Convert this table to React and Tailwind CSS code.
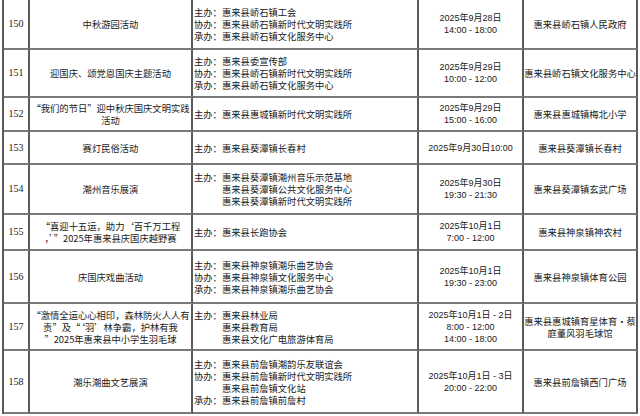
import React from "react";

const rows = [
  {
    n: "150",
    h: "h-[50px]",
    name: ["中秋游园活动"],
    org: [["主办：", "惠来县峤石镇工会"], ["协办：", "惠来县峤石镇新时代文明实践所"], ["承办：", "惠来县峤石镇文化服务中心"]],
    time: ["2025年9月28日", "14:00 - 18:00"],
    place: ["惠来县峤石镇人民政府"],
  },
  {
    n: "151",
    h: "h-[48px]",
    name: ["迎国庆、颂党恩国庆主题活动"],
    org: [["主办：", "惠来县委宣传部"], ["协办：", "惠来县峤石镇新时代文明实践所"], ["承办：", "惠来县峤石镇文化服务中心"]],
    time: ["2025年9月29日", "10:00 - 12:00"],
    place: ["惠来县峤石镇文化服务中心"],
  },
  {
    n: "152",
    h: "h-[34px]",
    name: ["“我们的节日”迎中秋庆国庆文明实践", "活动"],
    org: [["主办：", "惠来县惠城镇新时代文明实践所"]],
    time: ["2025年9月29日", "15:00 - 16:00"],
    place: ["惠来县惠城镇梅北小学"],
  },
  {
    n: "153",
    h: "h-[33px]",
    name: ["赛灯民俗活动"],
    org: [["主办：", "惠来县葵潭镇长春村"]],
    time: ["2025年9月30日10:00"],
    place: ["惠来县葵潭镇长春村"],
  },
  {
    n: "154",
    h: "h-[50px]",
    name: ["潮州音乐展演"],
    org: [["主办：", "惠来县葵潭镇潮州音乐示范基地"], ["", "惠来县葵潭镇公共文化服务中心"], ["", "惠来县葵潭镇新时代文明实践所"]],
    time: ["2025年9月30日", "19:30 - 21:30"],
    place: ["惠来县葵潭镇玄武广场"],
  },
  {
    n: "155",
    h: "h-[36px]",
    name: ["“喜迎十五运，助力‘百千万工程", "，’”2025年惠来县庆国庆越野赛"],
    org: [["主办：", "惠来县长跑协会"]],
    time: ["2025年10月1日", "7:00 - 12:00"],
    place: ["惠来县神泉镇神农村"],
  },
  {
    n: "156",
    h: "h-[53px]",
    name: ["庆国庆戏曲活动"],
    org: [["主办：", "惠来县神泉镇潮乐曲艺协会"], ["协办：", "惠来县神泉镇文化服务中心"], ["承办：", "惠来县神泉镇潮乐曲艺协会"]],
    time: ["2025年10月1日", "19:30 - 23:00"],
    place: ["惠来县神泉镇体育公园"],
  },
  {
    n: "157",
    h: "h-[47px]",
    name: ["“激情全运心心相印，森林防火人人有", "责”及“‘羽’林争霸，护林有我", "”2025年惠来县中小学生羽毛球"],
    org: [["主办：", "惠来县林业局"], ["", "惠来县教育局"], ["", "惠来县文化广电旅游体育局"]],
    time: ["2025年10月1日 - 2日", "8:00 - 12:00", "14:00 - 18:00"],
    place: ["惠来县惠城镇育星体育・蔡", "庭董风羽毛球馆"],
  },
  {
    n: "158",
    h: "h-[63px]",
    name: ["潮乐潮曲文艺展演"],
    org: [["主办：", "惠来县前詹镇潮韵乐友联谊会"], ["协办：", "惠来县前詹镇新时代文明实践所"], ["", "惠来县前詹镇文化站"], ["承办：", "惠来县前詹镇前詹村"]],
    time: ["2025年10月1日 - 3日", "20:00 - 22:00"],
    place: ["惠来县前詹镇西门广场"],
  },
];

const cell = "border-r-2 border-b-2 border-r-[#5a5a5a] border-b-[#7a7a7a] flex items-center whitespace-nowrap overflow-hidden";

export default function App() {
  return (
    <div className="w-[640px] h-[416px] bg-white overflow-hidden text-[#1a1a1a]">
      <div className="ml-[2px] w-[636px] border-l-2 border-l-[#5a5a5a] grid grid-cols-[26px_163px_226px_105px_114px] text-[9.3px] leading-[12px] font-['Noto_Sans_CJK_SC',sans-serif]">
        {rows.map((r) => (
          <React.Fragment key={r.n}>
            <div className={`${cell} ${r.h} justify-center font-['Liberation_Serif','Noto_Sans_CJK_SC',serif] text-[10px]`}>
              {r.n}
            </div>
            <div className={`${cell} ${r.h} justify-center`}>
              <div className="text-center">
                {r.name.map((l, i) => (
                  <div key={i}>{l}</div>
                ))}
              </div>
            </div>
            <div className={`${cell} ${r.h} pl-[1px]`}>
              <div className="grid grid-cols-[28px_auto]">
                {r.org.map(([a, b], i) => (
                  <React.Fragment key={i}>
                    <span className="whitespace-nowrap">{a}</span>
                    <span className="whitespace-nowrap">{b}</span>
                  </React.Fragment>
                ))}
              </div>
            </div>
            <div className={`${cell} ${r.h} justify-center`}>
              <div className="text-center font-['Liberation_Sans','Noto_Sans_CJK_SC',sans-serif] text-[9px] leading-[12px]">
                {r.time.map((l, i) => (
                  <div key={i}>{l}</div>
                ))}
              </div>
            </div>
            <div className={`${cell} ${r.h} justify-center`}>
              <div className="text-center">
                {r.place.map((l, i) => (
                  <div key={i}>{l}</div>
                ))}
              </div>
            </div>
          </React.Fragment>
        ))}
      </div>
    </div>
  );
}
